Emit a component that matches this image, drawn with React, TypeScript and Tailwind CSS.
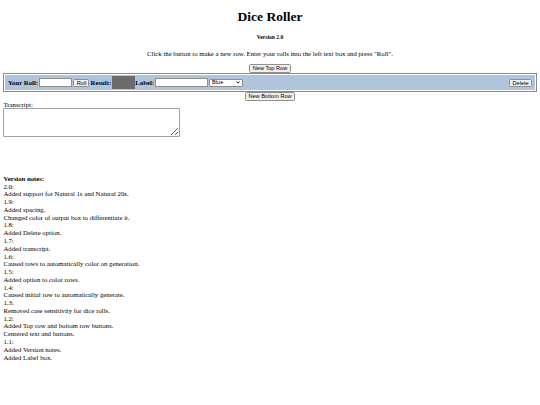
const notes: [string, string[]][] = [
  ['2.0:', ['Added support for Natural 1s and Natural 20s.']],
  ['1.9:', ['Added spacing.', 'Changed color of output box to differentiate it.']],
  ['1.8:', ['Added Delete option.']],
  ['1.7:', ['Added transcript.']],
  ['1.6:', ['Caused rows to automatically color on generation.']],
  ['1.5:', ['Added option to color rows.']],
  ['1.4:', ['Caused initial row to automatically generate.']],
  ['1.3:', ['Removed case sensitivity for dice rolls.']],
  ['1.2:', ['Added Top row and bottom row buttons.', 'Centered text and buttons.']],
  ['1.1:', ['Added Version notes.', 'Added Label box.']],
];

function Btn({ label, className = '' }: { label: string; className?: string }) {
  return (
    <button
      className={
        'h-[8.4px] px-[2.6px] border-[0.8px] border-[#8f8f8f] rounded-[1.5px] bg-[#efefef] text-black text-[5.6px] leading-[6px] font-["Liberation_Sans",Arial,sans-serif] ' +
        className
      }
    >
      {label}
    </button>
  );
}

export default function App() {
  return (
    <div className="min-h-[405px] bg-white px-[3.4px] pt-[9px] pb-[10px] text-black text-[6.75px] leading-[7.76px] font-['Liberation_Serif','Times_New_Roman',serif]">
      <h1 className="text-center text-[13.5px] leading-[15.5px] font-bold">Dice Roller</h1>
      <h5 className="mt-[9.4px] text-center text-[5.6px] leading-[6.4px] font-bold">Version 2.0</h5>
      <p className="mt-[9.4px] text-center">
        Click the button to make a new row. Enter your rolls into the left text box and press "Roll".
      </p>

      <div className="mt-[6.8px] flex justify-center">
        <Btn label="New Top Row" />
      </div>

      {/* row */}
      <div className="mt-[0.6px] border-[1px] border-[#8a8a8a] p-[1px]">
        <div className="h-[15px] bg-[#b0c4de] flex items-center pl-[2.6px] pr-[3px]">
          <b className="font-bold">Your Roll:</b>
          <input className="ml-[1.4px] w-[32.7px] h-[9px] bg-white border-[0.6px] border-[#8f8f8f] outline-none" />
          <Btn label="Roll" className="ml-[1px] w-[16.2px] px-0" />
          <b className="ml-[1.2px] font-bold">Result:</b>
          <div className="ml-[0.8px] w-[23.4px] h-[13px] bg-[#6b6b6b]" />
          <b className="font-bold">Label:</b>
          <input className="ml-[0.6px] w-[53.4px] h-[9px] bg-white border-[0.6px] border-[#8f8f8f] outline-none" />
          <div className="ml-[1px] w-[34.4px] h-[8.4px] bg-white border-[0.6px] border-[#8f8f8f] rounded-[1px] flex items-center justify-between pl-[2px] pr-[2.5px] text-[5.6px] font-['Liberation_Sans',Arial,sans-serif]">
            <span>Blue</span>
            <svg width="4" height="3" viewBox="0 0 4 3" className="block">
              <polyline points="0.4,0.5 2,2.2 3.6,0.5" fill="none" stroke="#000" strokeWidth="0.9" />
            </svg>
          </div>
          <Btn label="Delete" className="ml-auto w-[22.7px] px-0" />
        </div>
      </div>

      <div className="flex justify-center">
        <Btn label="New Bottom Row" />
      </div>

      <div>Transcript:</div>
      <textarea className="block w-[177px] h-[28.5px] bg-white border-[0.6px] border-[#a0a0a0] rounded-[1px] outline-none resize-y" />

      <div className="mt-[38px]">
        <b className="font-bold">Version notes:</b>
        {notes.map(([v, lines]) => (
          <div key={v}>
            <div>{v}</div>
            {lines.map((l) => (
              <div key={l}>{l}</div>
            ))}
          </div>
        ))}
      </div>
    </div>
  );
}
